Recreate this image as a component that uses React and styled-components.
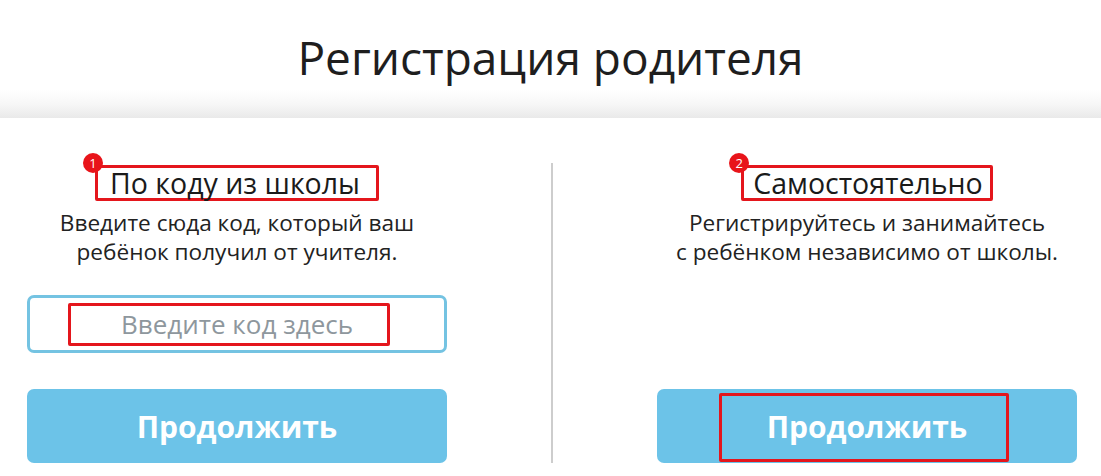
import React from "react";
import styled, { createGlobalStyle } from "styled-components";

const Global = createGlobalStyle`
  html, body { margin: 0; padding: 0; background: #fff; }
  body { font-family: "Open Sans", "Liberation Sans", sans-serif; color: #222; }
  * { box-sizing: border-box; }
`;

const Header = styled.header`
  height: 118px;
  padding-top: 34px;
  background: linear-gradient(to bottom, #fff 0, #fff 90px, #f7f7f7 104px, #e9e9e9 118px);
  text-align: center;
`;

const Title = styled.h1`
  margin: 0;
  font-size: 46px;
  line-height: 46px;
  font-weight: 400;
  color: #1e1e1e;
`;

const Main = styled.main`
  display: grid;
  grid-template-columns: 420px 2px 420px;
  column-gap: 104px;
  padding: 45px 0 0 27px;
`;

const Divider = styled.div`
  background: #cdcdcd;
  width: 2px;
`;

const Column = styled.section`
  display: flex;
  flex-direction: column;
  align-items: center;
  height: 300px;
`;

const Heading = styled.h2`
  position: relative;
  margin: 2px 0 0;
  font-size: 28.5px;
  line-height: 30px;
  font-weight: 400;
  color: #1a1a1a;
  border: 3px solid #e4161c;
  border-radius: 2px;
  padding: 0 ${(p) => p.$pr}px 0 ${(p) => p.$pl}px;
`;

const Badge = styled.span`
  position: absolute;
  left: -15px;
  top: -15px;
  width: 20px;
  height: 20px;
  border-radius: 50%;
  background: #e8141a;
  color: #fff;
  font-size: 13px;
  line-height: 20px;
  text-align: center;
`;

const Description = styled.p`
  margin: 7px 0 0;
  font-size: 22.6px;
  line-height: 29px;
  text-align: center;
  color: #222;
`;

const InputWrap = styled.div`
  position: relative;
  width: 420px;
  height: 58px;
  margin-top: 29px;
  border: 3px solid #74c3e2;
  border-radius: 7px;
`;

const CodeInput = styled.input`
  width: 100%;
  height: 100%;
  border: none;
  outline: none;
  background: transparent;
  font-family: inherit;
  font-size: 26px;
  text-align: center;
  color: #333;
  &::placeholder { color: #8e979d; }
`;

const Mark = styled.span`
  position: absolute;
  left: ${(p) => p.$x}px;
  top: ${(p) => p.$y}px;
  width: ${(p) => p.$w}px;
  height: ${(p) => p.$h}px;
  border: 3px solid #e4161c;
  border-radius: 2px;
  pointer-events: none;
`;

const Button = styled.button`
  position: relative;
  width: 420px;
  height: 74px;
  margin-top: auto;
  border: none;
  border-radius: 7px;
  background: #6cc3e8;
  color: #fff;
  font-family: inherit;
  font-size: 30px;
  font-weight: 700;
  cursor: pointer;
`;

export default function App() {
  return (
    <>
      <Global />
      <Header>
        <Title>Регистрация родителя</Title>
      </Header>
      <Main>
        <Column>
          <Heading $pl={12} $pr={16}>
            <Badge>1</Badge>
            По коду из школы
          </Heading>
          <Description>
            Введите сюда код, который ваш
            <br />
            ребёнок получил от учителя.
          </Description>
          <InputWrap>
            <CodeInput placeholder="Введите код здесь" />
            <Mark $x={38} $y={5} $w={322} $h={43} />
          </InputWrap>
          <Button>Продолжить</Button>
        </Column>
        <Divider />
        <Column>
          <Heading $pl={9} $pr={7}>
            <Badge>2</Badge>
            Самостоятельно
          </Heading>
          <Description>
            Регистрируйтесь и занимайтесь
            <br />
            с ребёнком независимо от школы.
          </Description>
          <Button>
            Продолжить
            <Mark $x={62} $y={4} $w={290} $h={69} />
          </Button>
        </Column>
      </Main>
    </>
  );
}
